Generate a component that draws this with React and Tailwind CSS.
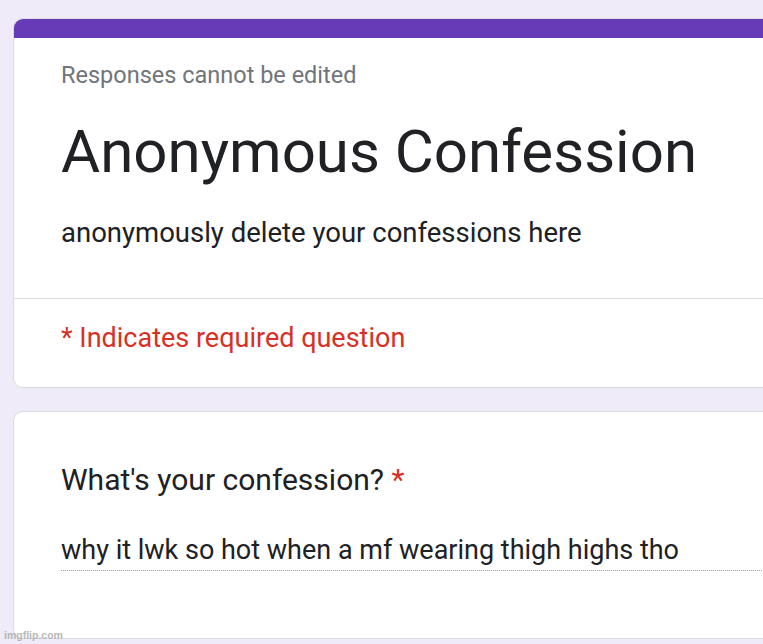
export default function App() {
  return (
    <div className="relative h-[644px] w-[763px] overflow-hidden bg-[#efebf8] pl-[13px] pt-[18px] font-['Roboto',sans-serif]">
      <div className="w-[800px] overflow-hidden rounded-[10px] border border-[#dadce0] bg-white">
        <div className="h-[19px] bg-[#673ab7]" />
        <div className="px-[47px] pb-[50px] pt-[22px]">
          <div className="text-[23.5px] leading-[30px] text-[#70757a]">Responses cannot be edited</div>
          <div className="mt-[26px] text-[60px] leading-[72px] text-[#202124]">Anonymous Confession</div>
          <div className="mt-[30px] text-[27.5px] leading-[30px] text-[#202124]">anonymously delete your confessions here</div>
        </div>
        <div className="h-px bg-[#dadce0]" />
        <div className="px-[47px] pb-[34px] pt-[24px]">
          <div className="text-[27px] leading-[30px] text-[#d93025]">* Indicates required question</div>
        </div>
      </div>
      <div className="mt-[23px] w-[800px] rounded-[10px] border border-[#dadce0] bg-white pb-[67px] pl-[47px] pt-[52px]">
        <div className="text-[30px] leading-[32px] text-[#202124]">
          What's your confession? <span className="text-[#d93025]">*</span>
        </div>
        <div className="mt-[39px] border-b border-dotted border-[#9aa0a6] pb-[5px] text-[27px] leading-[30px] text-[#202124]">
          why it lwk so hot when a mf wearing thigh highs tho
        </div>
      </div>
      <div className="absolute bottom-[2px] left-[4px] font-['Liberation_Sans',sans-serif] text-[10.5px] font-bold leading-[14px] text-[#a8a8a8] opacity-80">
        imgflip.com
      </div>
    </div>
  );
}
